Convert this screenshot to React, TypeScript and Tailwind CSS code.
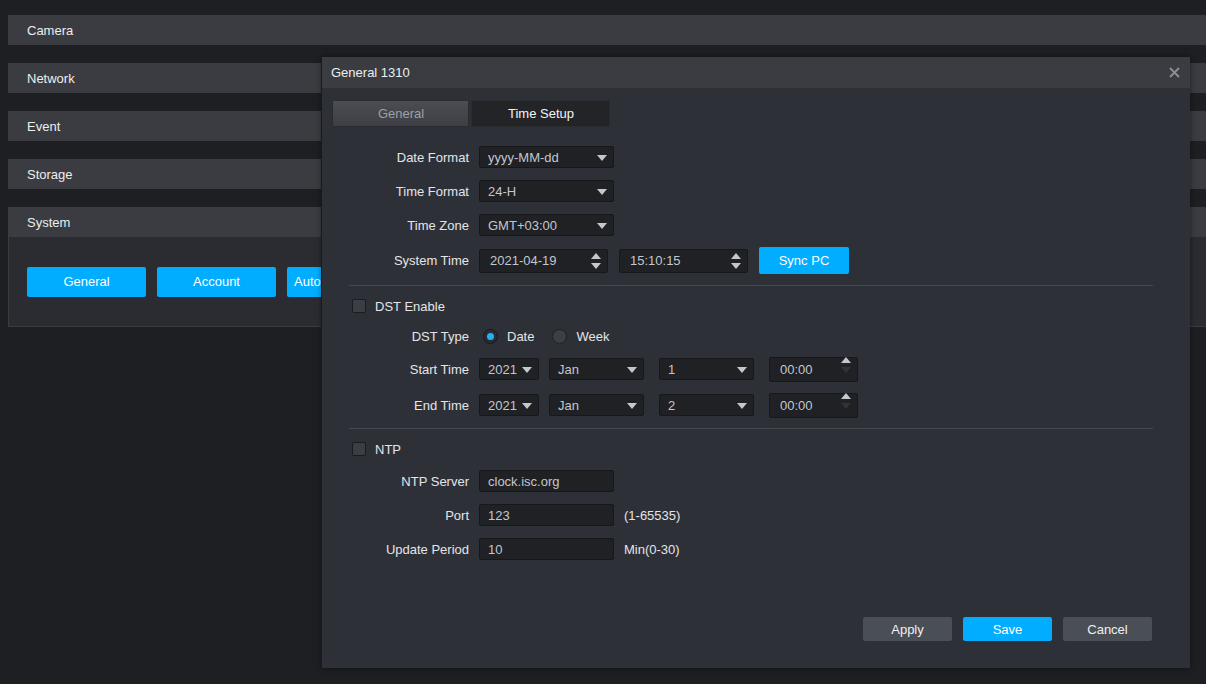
import React from "react";

const FONT = { fontFamily: '"Liberation Sans", Arial, sans-serif' };

function Caret() {
  return (
    <svg width="10" height="6" viewBox="0 0 10 6" className="shrink-0">
      <path d="M0 0 L10 0 L5 6 Z" fill="#c4c7cc" />
    </svg>
  );
}

function SpinArrows({ downDim }: { downDim?: boolean }) {
  return (
    <svg width="10" height="16" viewBox="0 0 10 16" className="shrink-0">
      <path d="M0 6 L5 0 L10 6 Z" fill="#c4c7cc" />
      <path d="M0 10 L10 10 L5 16 Z" fill={downDim ? "#30333a" : "#c4c7cc"} />
    </svg>
  );
}

function Select({ value, w }: { value: string; w: string }) {
  return (
    <div
      className={`${w} h-[22px] flex items-center justify-between pl-[8px] pr-[6px] pt-px bg-[#1f2125] border border-[#17181b] rounded-[2px] text-[13px] text-[#c3c7ce]`}
    >
      <span>{value}</span>
      <Caret />
    </div>
  );
}

function Spinner({ value, w, h, downDim }: { value: string; w: string; h: string; downDim?: boolean }) {
  return (
    <div
      className={`${w} ${h} flex items-center justify-between pl-[10px] pr-[6px] bg-[#1f2125] border border-[#17181b] rounded-[2px] text-[13px] text-[#c3c7ce]`}
    >
      <span className="pt-px">{value}</span>
      <div className={downDim ? "-mt-[8px]" : ""}>
        <SpinArrows downDim={downDim} />
      </div>
    </div>
  );
}

function TextInput({ value }: { value: string }) {
  return (
    <div className="w-[135px] h-[22px] flex items-center pl-[8px] pt-px bg-[#1f2125] border border-[#17181b] rounded-[2px] text-[13px] text-[#c3c7ce]">
      {value}
    </div>
  );
}

function Row({ label, h, children }: { label: string; h: string; children: React.ReactNode }) {
  return (
    <div className={`flex items-center ${h}`}>
      <div className="w-[147px] pt-px text-right text-[13px] text-[#e4e5e7]">{label}</div>
      <div className="ml-[10px] flex items-center">{children}</div>
    </div>
  );
}

function Checkbox({ label }: { label: string }) {
  return (
    <div className="flex items-center h-[20px] pl-[30px]">
      <div className="w-[14px] h-[14px] bg-[#3b3e44] border border-[#1b1c20] rounded-[2px]" />
      <span className="ml-[9px] pt-px text-[13px] text-[#e4e5e7]">{label}</span>
    </div>
  );
}

function Radio({ checked, label }: { checked?: boolean; label: string }) {
  return (
    <div className="flex items-center">
      <div
        className={`w-[15px] h-[15px] rounded-full border flex items-center justify-center ${
          checked ? "bg-[#2a2c31] border-[#17181b]" : "bg-[#3d3f45] border-[#202125]"
        }`}
      >
        {checked && <div className="w-[7px] h-[7px] rounded-full bg-[#22b0f5]" />}
      </div>
      <span className="ml-[9px] pt-px text-[13px] text-[#e4e5e7]">{label}</span>
    </div>
  );
}

function Section({ title }: { title: string }) {
  return (
    <div className="h-[30px] bg-[#3a3c41] flex items-center pl-[19px] pt-px text-[13px] text-[#eceef0]">{title}</div>
  );
}

export default function App() {
  return (
    <div className="relative w-[1206px] h-[684px] overflow-hidden bg-[#1e1f23]" style={FONT}>
      <div className="pl-2 pt-[15px] flex flex-col gap-[18px]">
        <Section title="Camera" />
        <Section title="Network" />
        <Section title="Event" />
        <Section title="Storage" />
        <div>
          <Section title="System" />
          <div className="h-[90px] bg-[#2a2c31] border-l border-b border-[#3a3c41] flex items-center gap-[11px] pl-[18px]">
            {["General", "Account", "Auto Maintenance", "Import/Export"].map((b) => (
              <div
                key={b}
                className="w-[119px] h-[30px] bg-[#00adff] rounded-[2px] flex items-center justify-center pt-px text-[13px] text-white whitespace-nowrap"
              >
                {b}
              </div>
            ))}
          </div>
        </div>
      </div>

      <div className="absolute left-[322px] top-[57px] w-[868px] h-[611px] bg-[#2e3038] shadow-[-1px_0_0_#1a1b1f,0_0_6px_rgba(0,0,0,0.5)] flex flex-col">
        <div className="h-[31px] bg-[#3a3c41] flex items-center justify-between pl-[9px] pr-[10px] shrink-0">
          <span className="pt-px text-[13px] text-[#eceef0]">General 1310</span>
          <svg width="11" height="11" viewBox="0 0 11 11">
            <path d="M1 1 L10 10 M10 1 L1 10" stroke="#8b8f96" strokeWidth="1.8" />
          </svg>
        </div>

        <div className="flex mt-[12px] ml-[10px] gap-[2px]">
          <div className="w-[137px] h-[27px] bg-gradient-to-b from-[#4b4d52] to-[#3d3f44] border border-[#2a2c30] flex items-center justify-center pl-px text-[13px] text-[#9ca0a7]">
            General
          </div>
          <div className="w-[139px] h-[27px] bg-[#222428] border border-[#2a2c30] flex items-center justify-center pl-px text-[13px] text-[#f2f3f5]">
            Time Setup
          </div>
        </div>

        <div className="flex flex-col mt-[19px]">
          <Row label="Date Format" h="h-[22px]">
            <Select value="yyyy-MM-dd" w="w-[135px]" />
          </Row>
          <div className="mt-[12px]">
            <Row label="Time Format" h="h-[22px]">
              <Select value="24-H" w="w-[135px]" />
            </Row>
          </div>
          <div className="mt-[12px]">
            <Row label="Time Zone" h="h-[22px]">
              <Select value="GMT+03:00" w="w-[135px]" />
            </Row>
          </div>
          <div className="mt-[11px]">
            <Row label="System Time" h="h-[27px]">
              <Spinner value="2021-04-19" w="w-[129px]" h="h-[24px]" />
              <div className="ml-[11px]">
                <Spinner value="15:10:15" w="w-[129px]" h="h-[24px]" />
              </div>
              <div className="ml-[11px] w-[90px] h-[27px] bg-[#00adff] rounded-[2px] flex items-center justify-center pt-px text-[13px] text-white">
                Sync PC
              </div>
            </Row>
          </div>

          <div className="mt-[11px] ml-[27px] mr-[37px] h-px bg-[#45484f]" />

          <div className="mt-[10px]">
            <Checkbox label="DST Enable" />
          </div>
          <div className="mt-[10px]">
            <Row label="DST Type" h="h-[20px]">
              <div className="ml-[4px] flex items-center gap-[18px]">
                <Radio checked label="Date" />
                <Radio label="Week" />
              </div>
            </Row>
          </div>
          {[
            ["Start Time", "1"],
            ["End Time", "2"],
          ].map(([label, day]) => (
            <div key={label} className="mt-[10px]">
              <Row label={label} h="h-[26px]">
                <Select value="2021" w="w-[60px]" />
                <div className="ml-[10px]">
                  <Select value="Jan" w="w-[95px]" />
                </div>
                <div className="ml-[15px]">
                  <Select value={day} w="w-[95px]" />
                </div>
                <div className="ml-[15px]">
                  <Spinner value="00:00" w="w-[89px]" h="h-[25px]" downDim />
                </div>
              </Row>
            </div>
          ))}

          <div className="mt-[10px] ml-[27px] mr-[37px] h-px bg-[#45484f]" />

          <div className="mt-[10px]">
            <Checkbox label="NTP" />
          </div>
          <div className="mt-[11px]">
            <Row label="NTP Server" h="h-[22px]">
              <TextInput value="clock.isc.org" />
            </Row>
          </div>
          <div className="mt-[12px]">
            <Row label="Port" h="h-[22px]">
              <TextInput value="123" />
              <span className="ml-[10px] pt-px text-[13px] text-[#e4e5e7]">(1-65535)</span>
            </Row>
          </div>
          <div className="mt-[12px]">
            <Row label="Update Period" h="h-[22px]">
              <TextInput value="10" />
              <span className="ml-[10px] pt-px text-[13px] text-[#e4e5e7]">Min(0-30)</span>
            </Row>
          </div>
        </div>

        <div className="mt-auto mb-[27px] mr-[38px] flex justify-end gap-[11px]">
          <div className="w-[89px] h-[24px] bg-[#4a4e55] rounded-[2px] flex items-center justify-center pt-px text-[13px] text-[#f0f1f3]">
            Apply
          </div>
          <div className="w-[89px] h-[24px] bg-[#00adff] rounded-[2px] flex items-center justify-center pt-px text-[13px] text-white">
            Save
          </div>
          <div className="w-[89px] h-[24px] bg-[#4a4e55] rounded-[2px] flex items-center justify-center pt-px text-[13px] text-[#f0f1f3]">
            Cancel
          </div>
        </div>
      </div>
    </div>
  );
}
